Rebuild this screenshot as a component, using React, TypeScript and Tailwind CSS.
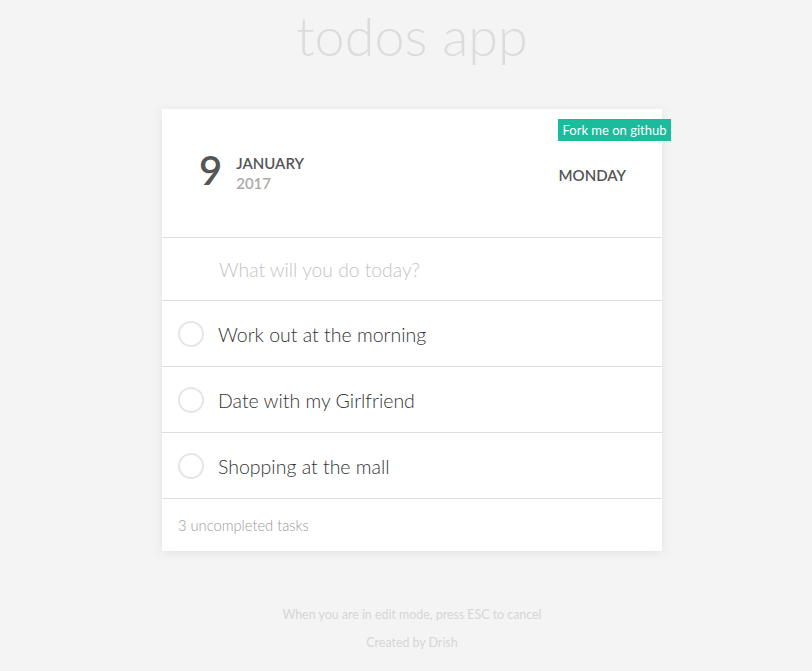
import React from "react";

const items = ["Work out at the morning", "Date with my Girlfriend", "Shopping at the mall"];

export default function App() {
  return (
    <div
      className="min-h-[671px] w-full bg-[#f4f4f4] flex flex-col items-center pl-[12px]"
      style={{ fontFamily: "Lato, 'Open Sans', sans-serif" }}
    >
      <h1 className="mt-[4px] h-[64px] text-[54px] leading-[64px] font-light text-[#dcdcdc]">
        todos app
      </h1>
      <div className="mt-[41px] w-[500px] bg-white shadow-[0_2px_10px_rgba(0,0,0,0.08)] relative">
        <div className="absolute left-[396px] top-[10px] h-[22px] w-[113px] bg-[#1abc9c] text-white text-[13px] leading-[22px] text-center">
          Fork me on github
        </div>
        <div className="h-[129px] border-b border-[#dedede] flex items-center pl-[37px] pr-[36px]">
          <div className="text-[40px] leading-none font-semibold text-[#555] mr-[14px] mb-[6px]">9</div>
          <div className="flex flex-col">
            <div className="text-[15px] leading-[20px] font-semibold text-[#555] uppercase">January</div>
            <div className="text-[15px] leading-[20px] font-semibold text-[#aaa]">2017</div>
          </div>
          <div className="ml-auto text-[15px] font-semibold text-[#555] mt-[5px]">MONDAY</div>
        </div>
        <div className="h-[63px] border-b border-[#dedede] flex items-center pl-[57px]">
          <span className="text-[19.3px] text-[#c4c4c4] font-light mt-[2px]">What will you do today?</span>
        </div>
        {items.map((t) => (
          <div key={t} className="h-[66px] border-b border-[#dedede] flex items-center pl-[16px]">
            <div className="w-[26px] h-[26px] rounded-full border-2 border-[#e6e6e6] mr-[14px]" />
            <span className="text-[19.5px] text-[#333] font-light mt-[3px]">{t}</span>
          </div>
        ))}
        <div className="h-[52px] flex items-center pl-[16px]">
          <span className="text-[14.7px] text-[#999] font-light">3 uncompleted tasks</span>
        </div>
      </div>
      <div className="mt-[55px] text-[12.4px] text-[#d6d6d6]">When you are in edit mode, press ESC to cancel</div>
      <div className="mt-[9px] text-[12.4px] text-[#d6d6d6]">Created by Drish</div>
    </div>
  );
}
